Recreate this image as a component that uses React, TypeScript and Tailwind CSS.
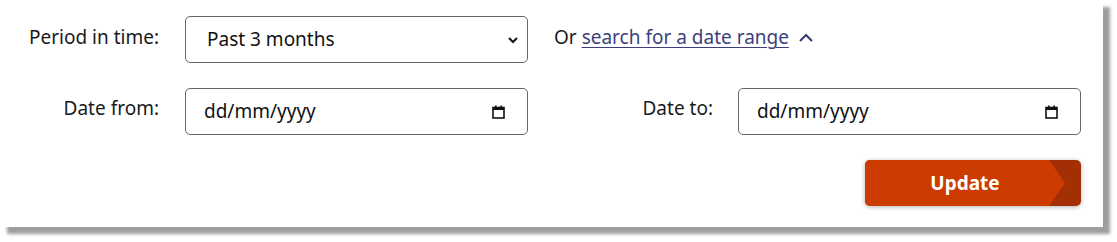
import React from "react";

const font = { fontFamily: '"Noto Sans", "Open Sans", sans-serif' };

function CalendarIcon() {
  return (
    <svg width="13" height="14" viewBox="0 0 13 14" aria-hidden="true">
      <rect x="1" y="2.5" width="11" height="10.5" fill="none" stroke="#111" strokeWidth="1.6" />
      <rect x="1" y="2" width="11" height="3" fill="#111" />
      <rect x="3" y="0.5" width="1.6" height="2.5" fill="#111" />
      <rect x="8.4" y="0.5" width="1.6" height="2.5" fill="#111" />
    </svg>
  );
}

function DateField() {
  return (
    <div className="flex h-[47px] w-[343px] items-center justify-between rounded-[5px] border border-[#666] bg-white pl-[18px] pr-[22px] text-[19px] text-[#111]">
      <span>dd/mm/yyyy</span>
      <CalendarIcon />
    </div>
  );
}

export default function App() {
  return (
    <div className="h-[242px] w-[1117px] bg-white text-[#1a1a1a]" style={font}>
      <div className="h-[227px] w-[1103px] bg-white pt-[16px] shadow-[7px_7px_3px_rgba(0,0,0,0.38)]">
        {/* Row 1: period select */}
        <div className="flex items-center">
          <label className="w-[159px] -translate-y-[2px] text-right text-[19px]">Period in time:</label>
          <div className="relative ml-[26px] h-[47px] w-[343px] rounded-[5px] border border-[#666] bg-white">
            <div className="flex h-full items-center pl-[21px] text-[19px] text-[#111]">Past 3 months</div>
            <svg
              className="absolute right-[8px] top-[19px]"
              width="12"
              height="8"
              viewBox="0 0 12 8"
              aria-hidden="true"
            >
              <path d="M2 2 L6 6 L10 2" fill="none" stroke="#111" strokeWidth="2" />
            </svg>
          </div>
          <div className="ml-[26px] flex -translate-y-[2px] items-center text-[19px]">
            <span>Or&nbsp;</span>
            <a href="#" className="text-[#3d3f7c] underline decoration-1 underline-offset-[3px]">
              search for a date range
            </a>
            <svg className="ml-[9px]" width="16" height="10" viewBox="0 0 16 10" aria-hidden="true">
              <path d="M2 8 L8 2 L14 8" fill="none" stroke="#3d3f7c" strokeWidth="2.2" />
            </svg>
          </div>
        </div>

        {/* Row 2: date range */}
        <div className="mt-[25px] flex items-center">
          <label className="w-[159px] -translate-y-[3px] text-right text-[19px]">Date from:</label>
          <div className="ml-[26px]">
            <DateField />
          </div>
          <label className="w-[185px] -translate-y-[3px] text-right text-[19px]">Date to:</label>
          <div className="ml-[25px]">
            <DateField />
          </div>
        </div>

        {/* Row 3: button */}
        <div className="mt-[25px] flex w-[1081px] justify-end">
          <button className="relative h-[46px] w-[216px] overflow-hidden rounded-[5px] bg-[#a33005] pr-[16px] shadow-[0_1px_5px_rgba(0,0,0,0.3)]">
            <span className="absolute inset-0 bg-[#cc3b00] [clip-path:polygon(0_0,184px_0,200px_50%,184px_100%,0_100%)]" />
            <span className="relative text-[19px] font-bold text-white">Update</span>
          </button>
        </div>
      </div>
    </div>
  );
}
